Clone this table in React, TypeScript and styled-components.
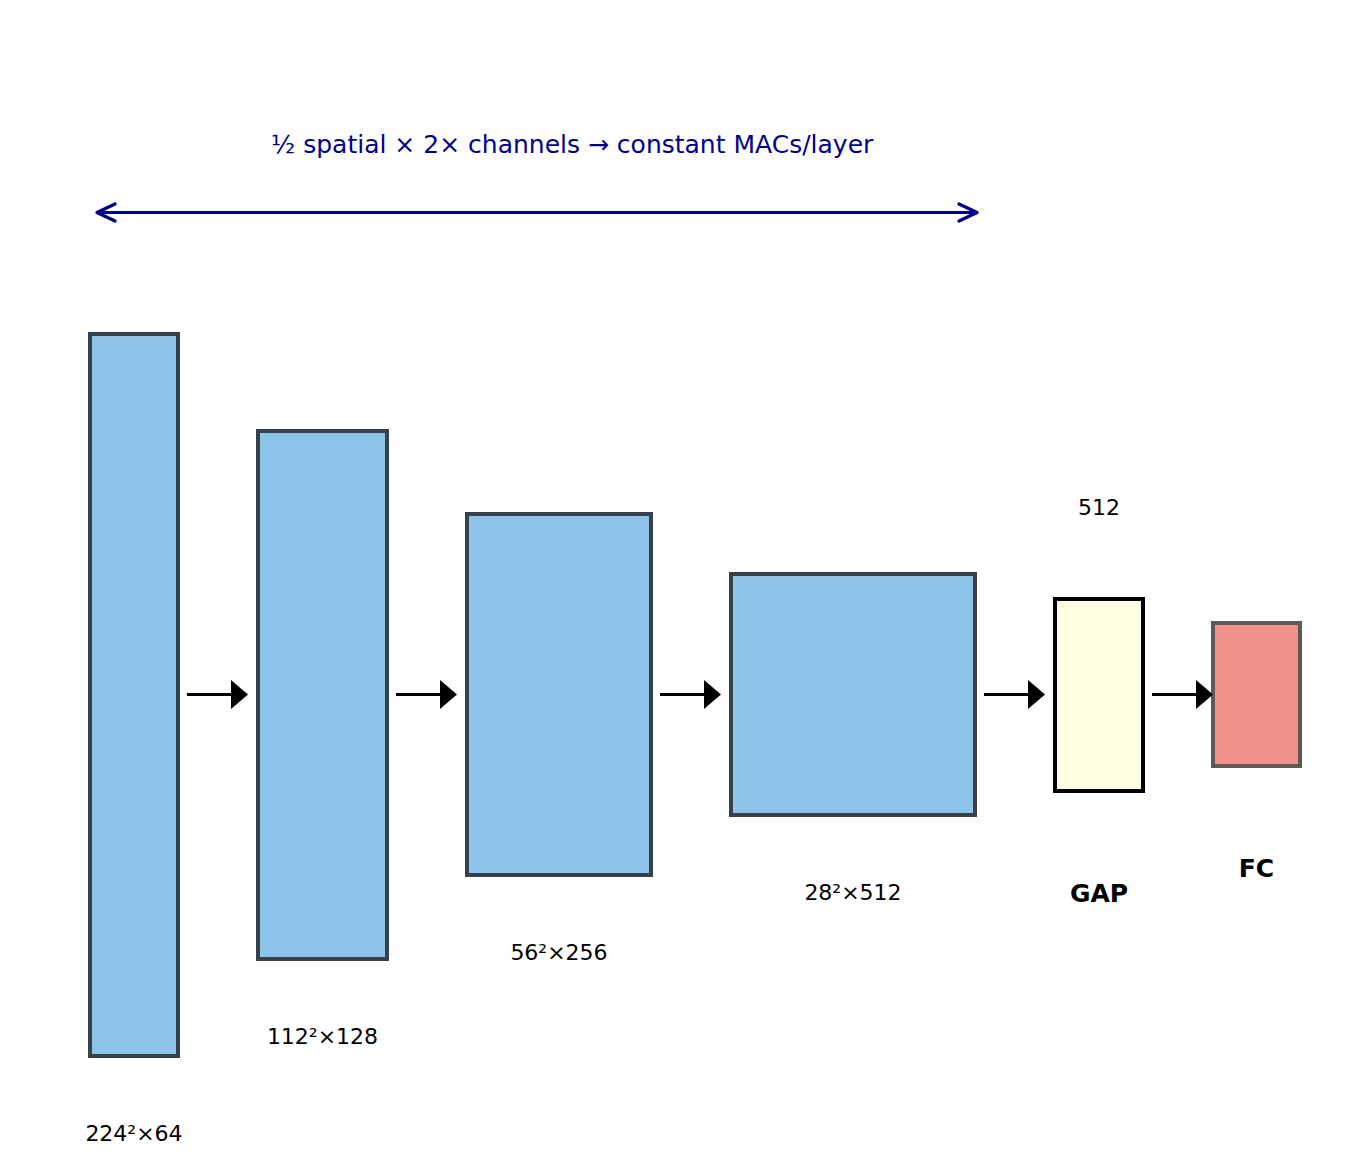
import React from "react";
import styled, { createGlobalStyle } from "styled-components";

const Global = createGlobalStyle`
  html, body { margin: 0; padding: 0; background: #ffffff; }
  body { font-family: "DejaVu Sans", "Liberation Sans", sans-serif; }
`;

const Canvas = styled.div`
  width: 1355px;
  height: 1166px;
  background: #ffffff;
  overflow: hidden;
  display: flex;
  flex-direction: column;
  align-items: flex-start;
`;

const Title = styled.div`
  margin-top: 131.5px;
  padding-left: 271px;
  white-space: nowrap;
  font-family: "DejaVu Sans", sans-serif;
  font-size: 25px;
  line-height: 25px;
  color: #00008b;
`;

const SpanArrow = styled.svg`
  display: block;
  margin-top: 43.5px;
  overflow: visible;
`;

const Pipeline = styled.div`
  margin-top: 106px;
  height: 727px;
  padding-left: 88px;
  display: flex;
  flex-direction: row;
  align-items: center;
`;

const Stage = styled.div<{ $w: number; $h: number }>`
  position: relative;
  flex: none;
  width: ${(p) => p.$w}px;
  height: ${(p) => p.$h}px;
`;

const Box = styled.div<{ $fill: string; $edge: string }>`
  box-sizing: border-box;
  width: 100%;
  height: 100%;
  background: ${(p) => p.$fill};
  border: 4px solid ${(p) => p.$edge};
`;

const Connector = styled.div<{ $span: number }>`
  flex: none;
  width: ${(p) => p.$span}px;
  display: flex;
  align-items: center;
  padding-left: 7px;
  box-sizing: border-box;
  overflow: visible;
  position: relative;
  z-index: 1;
`;

const FlowArrow = styled.svg`
  display: block;
  flex: none;
  overflow: visible;
`;

const Label = styled.div<{ $bold?: boolean; $below: number }>`
  position: absolute;
  left: 50%;
  top: ${(p) => (p.$below >= 0 ? `calc(100% + ${p.$below}px)` : `${p.$below}px`)};
  transform: translate(-50%, -50%);
  white-space: nowrap;
  font-family: "DejaVu Sans", sans-serif;
  font-size: ${(p) => (p.$bold ? 25 : 22)}px;
  line-height: 1;
  font-weight: ${(p) => (p.$bold ? 700 : 400)};
  color: #000000;
`;

type StageDef = {
  w: number;
  h: number;
  fill: string;
  edge: string;
  label: string;
  bold?: boolean;
  below: number;
  top?: string;
  span?: number;
};

const BLUE = "#8ec4e9";
const BLUE_EDGE = "#37414a";

const stages: StageDef[] = [
  { w: 92, h: 726, fill: BLUE, edge: BLUE_EDGE, label: "224²×64", below: 76, span: 76 },
  { w: 133, h: 532, fill: BLUE, edge: BLUE_EDGE, label: "112²×128", below: 76, span: 76 },
  { w: 188, h: 365, fill: BLUE, edge: BLUE_EDGE, label: "56²×256", below: 75.5, span: 76 },
  { w: 248, h: 245, fill: BLUE, edge: BLUE_EDGE, label: "28²×512", below: 75.5, span: 76 },
  {
    w: 92,
    h: 196,
    fill: "#fffee0",
    edge: "#000000",
    label: "GAP",
    bold: true,
    below: 100,
    top: "512",
    span: 66,
  },
  { w: 91, h: 147, fill: "#f0928a", edge: "#5f5a5a", label: "FC", bold: true, below: 100 },
];

export default function App() {
  return (
    <>
      <Global />
      <Canvas>
        <Title>½ spatial × 2× channels → constant MACs/layer</Title>
        <SpanArrow width={1000} height={25} viewBox="0 200 1000 25">
          <g
            stroke="#00008b"
            strokeWidth={3}
            fill="none"
            strokeLinecap="round"
            strokeLinejoin="round"
          >
            <line x1={98} y1={212.5} x2={976} y2={212.5} />
            <polyline points="115,204 97,212.5 115,221" strokeWidth={3.3} />
            <polyline points="959,204 977,212.5 959,221" strokeWidth={3.3} />
          </g>
        </SpanArrow>
        <Pipeline>
          {stages.map((s, i) => (
            <React.Fragment key={i}>
              <Stage $w={s.w} $h={s.h}>
                <Box $fill={s.fill} $edge={s.edge} />
                <Label $bold={s.bold} $below={s.below}>
                  {s.label}
                </Label>
                {s.top && <Label $below={-89}>{s.top}</Label>}
              </Stage>
              {s.span && (
                <Connector $span={s.span}>
                  <FlowArrow width={62} height={29} viewBox="0 0 62 29">
                    <line x1={0} y1={14.5} x2={45} y2={14.5} stroke="#000" strokeWidth={3} />
                    <polygon points="44,0 61,14.5 44,29" fill="#000" />
                  </FlowArrow>
                </Connector>
              )}
            </React.Fragment>
          ))}
        </Pipeline>
      </Canvas>
    </>
  );
}
